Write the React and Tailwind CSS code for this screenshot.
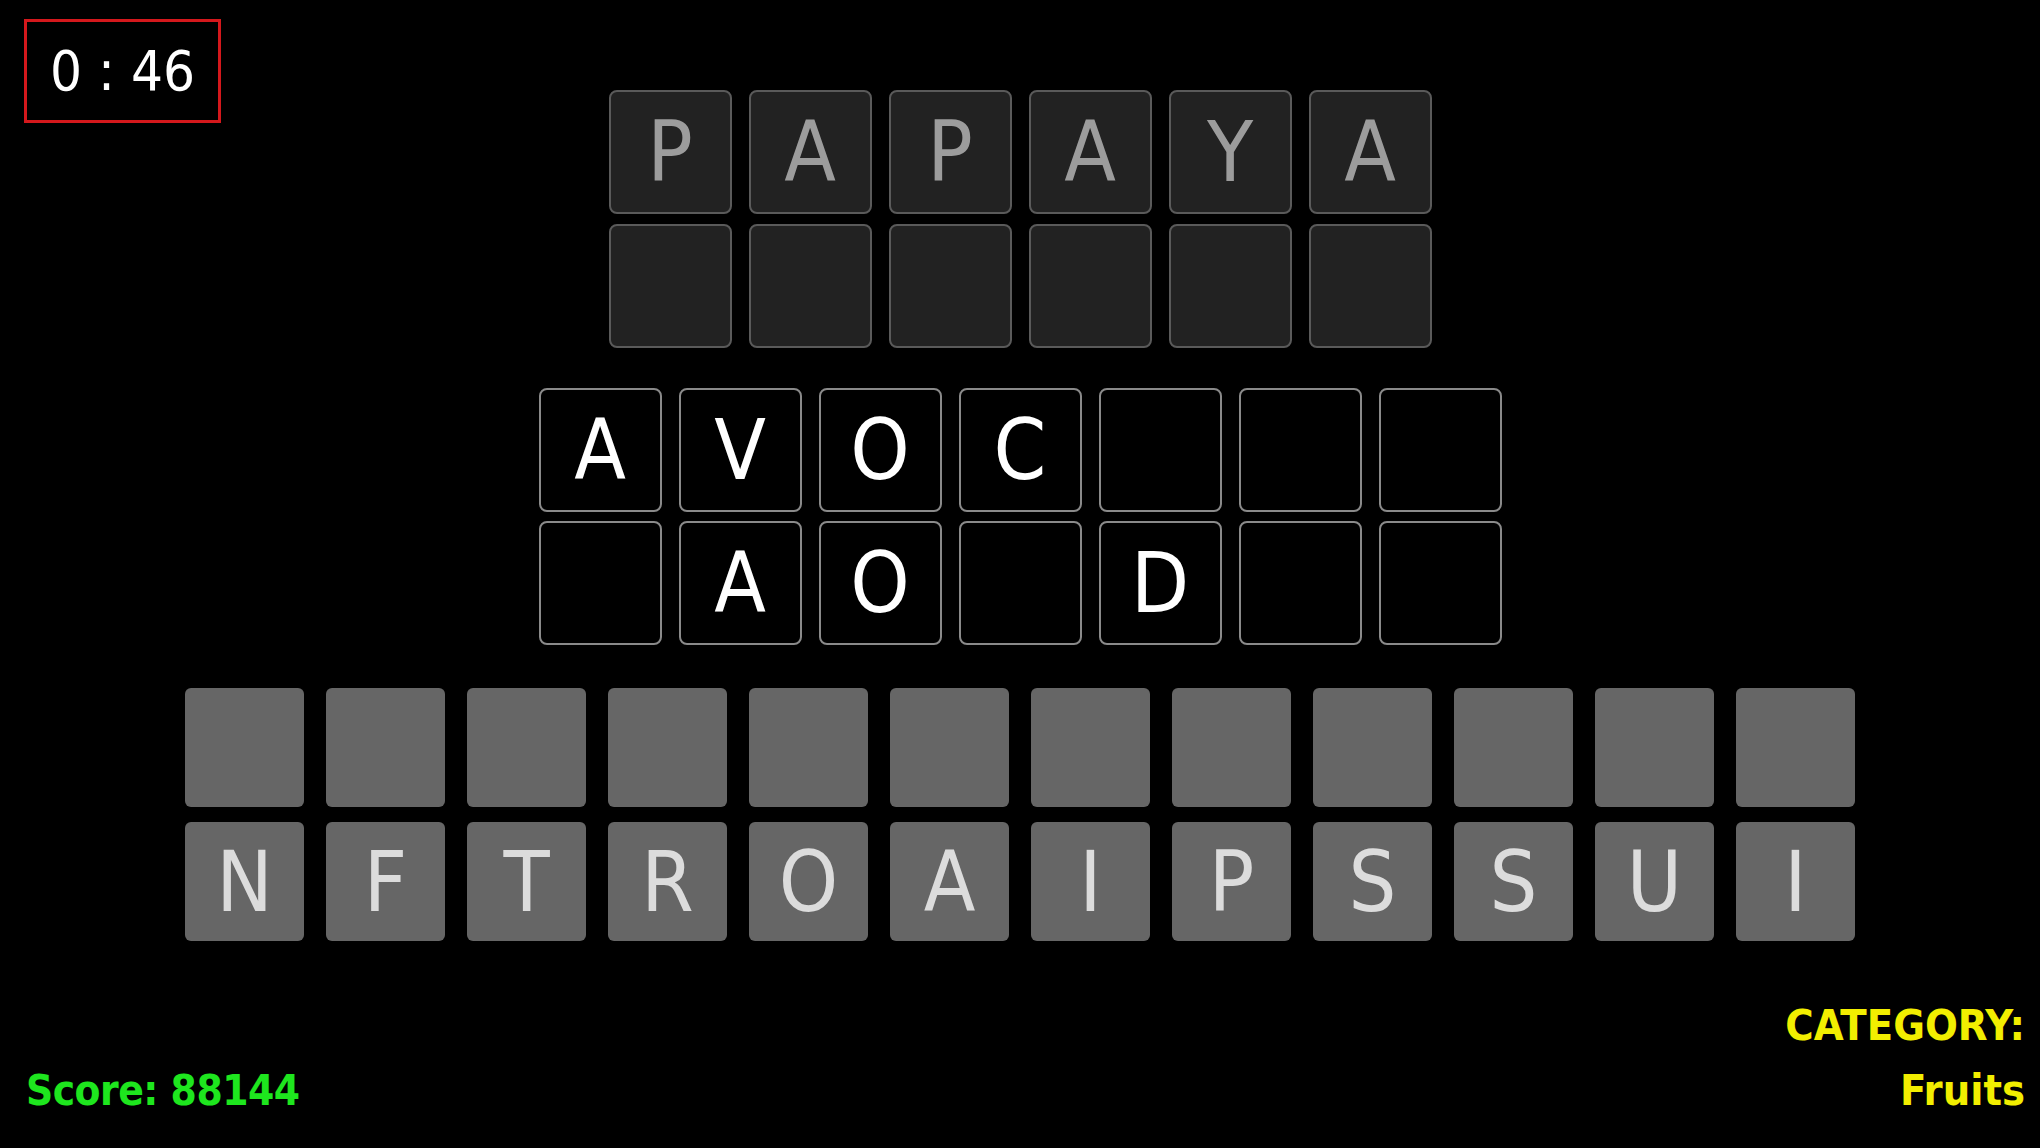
import React from "react";

const FONT = { fontFamily: '"DejaVu Sans Condensed", "DejaVu Sans", sans-serif' };

function TopTile({ ch }) {
  return (
    <div className="w-[123px] h-[124px] bg-[#222222] border-2 border-[#5a5a5a] rounded-[8px] flex items-center justify-center text-[84px] leading-none text-[#9c9c9c]">
      {ch}
    </div>
  );
}

function MidTile({ ch }) {
  return (
    <div className="w-[123px] h-[124px] bg-black border-2 border-[#8a8a8a] rounded-[8px] flex items-center justify-center text-[84px] leading-none text-white">
      {ch}
    </div>
  );
}

function KeyTile({ ch }) {
  return (
    <div className="w-[119px] h-[119px] bg-[#666666] rounded-[6px] flex items-center justify-center text-[84px] leading-none text-[#dcdcdc]">
      {ch}
    </div>
  );
}

export default function App() {
  const top1 = ["P", "A", "P", "A", "Y", "A"];
  const top2 = ["", "", "", "", "", ""];
  const mid1 = ["A", "V", "O", "C", "", "", ""];
  const mid2 = ["", "A", "O", "", "D", "", ""];
  const keys1 = Array(12).fill("");
  const keys2 = ["N", "F", "T", "R", "O", "A", "I", "P", "S", "S", "U", "I"];

  return (
    <div className="w-full h-[1148px] bg-black flex flex-col overflow-hidden" style={FONT}>
      <div className="grid grid-cols-[1fr_auto_1fr]">
        <div className="pt-[19px] pl-[24px]">
          <div className="w-[197px] h-[104px] border-[3px] border-[#d4181c] flex items-center justify-center text-white text-[56px] leading-none">
            0 : 46
          </div>
        </div>
        <div className="pt-[90px] flex flex-col gap-[10px]">
          <div className="flex gap-[17px]">
            {top1.map((c, i) => <TopTile key={i} ch={c} />)}
          </div>
          <div className="flex gap-[17px]">
            {top2.map((c, i) => <TopTile key={i} ch={c} />)}
          </div>
        </div>
        <div />
      </div>

      <div className="mt-[40px] flex flex-col items-center gap-[9px]">
        <div className="flex gap-[17px]">
          {mid1.map((c, i) => <MidTile key={i} ch={c} />)}
        </div>
        <div className="flex gap-[17px]">
          {mid2.map((c, i) => <MidTile key={i} ch={c} />)}
        </div>
      </div>

      <div className="mt-[43px] flex flex-col items-center gap-[15px]">
        <div className="flex gap-[22px]">
          {keys1.map((c, i) => <KeyTile key={i} ch={c} />)}
        </div>
        <div className="flex gap-[22px]">
          {keys2.map((c, i) => <KeyTile key={i} ch={c} />)}
        </div>
      </div>

      <div className="flex-1 flex justify-between items-end pl-[26px] pr-[15px] pb-[36px]">
        <div className="text-[#1ee61e] text-[42px] leading-none font-bold tracking-[-0.5px]">Score: 88144</div>
        <div className="flex flex-col items-end gap-[22px] text-[#f2ee00] text-[43px] leading-none font-bold">
          <div>CATEGORY:</div>
          <div>Fruits</div>
        </div>
      </div>
    </div>
  );
}
